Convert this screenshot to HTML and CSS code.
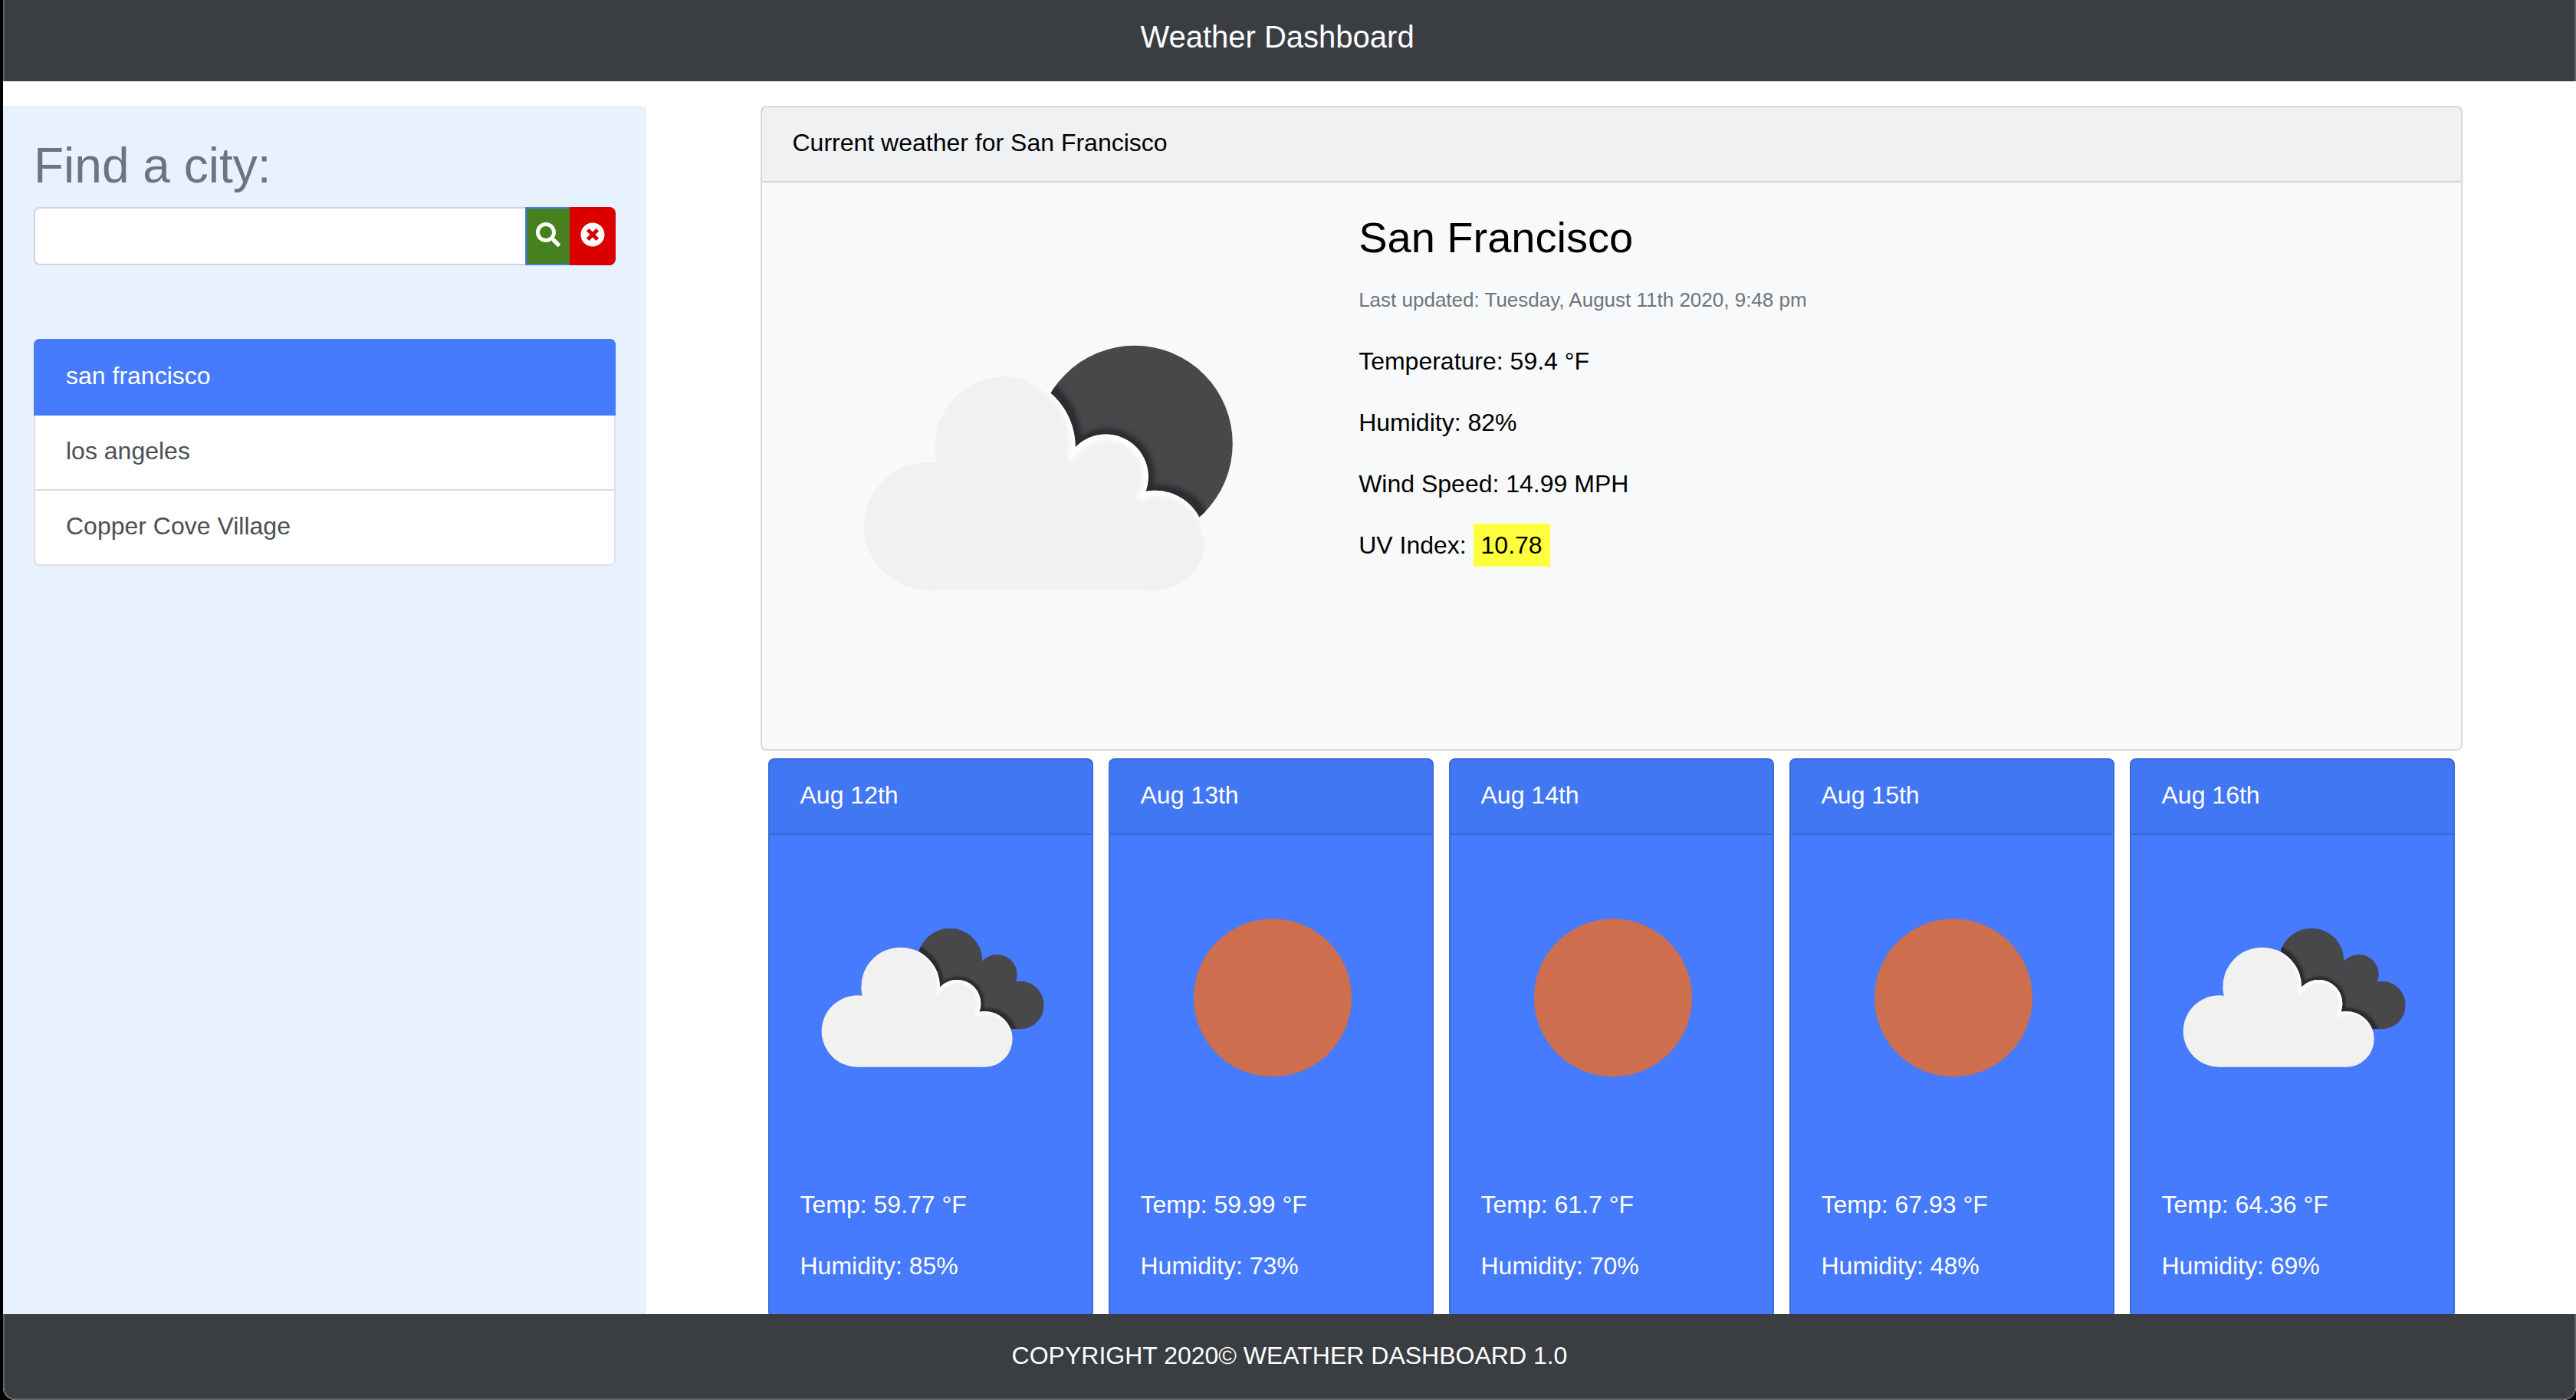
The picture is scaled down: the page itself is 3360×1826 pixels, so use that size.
FILE: index.html
```html
<!DOCTYPE html>
<html lang="en">
<head>
<meta charset="utf-8">
<title>Weather Dashboard</title>
<link rel="stylesheet" href="styles.css">
</head>
<body>
<svg class="sprite" aria-hidden="true">
  <defs>
    <g id="cloud-shape">
      <circle cx="343" cy="768" r="140"/>
      <circle cx="512" cy="594" r="154"/>
      <circle cx="733" cy="660" r="93"/>
      <circle cx="841" cy="799" r="109"/>
      <path d="M343 768 512 594 733 660 841 799V908H343z"/>
    </g>
    <clipPath id="front-clip">
      <circle cx="343" cy="768" r="140"/>
      <circle cx="512" cy="594" r="154"/>
      <circle cx="733" cy="660" r="93"/>
      <circle cx="841" cy="799" r="109"/>
      <path d="M343 768 512 594 733 660 841 799V908H343z"/>
    </clipPath>
    <clipPath id="back-clip">
      <circle cx="705" cy="492" r="127"/>
      <circle cx="890" cy="546" r="78"/>
      <circle cx="979" cy="666" r="94"/>
      <path d="M600 500 705 492 890 546 979 666V760H700z"/>
    </clipPath>
    <clipPath id="moon-clip"><circle cx="829" cy="581" r="218"/></clipPath>
    <filter id="soft" x="-20%" y="-20%" width="140%" height="140%"><feGaussianBlur stdDeviation="5"/></filter>
    <path id="rim" d="M570 440 A154 154 0 0 1 668 594 A93 93 0 0 1 822 692 A109 109 0 0 1 960 790"/>
    <g id="front-cloud">
      <use href="#cloud-shape" fill="#f1f1ef"/>
      <g clip-path="url(#front-clip)"><use href="#rim" fill="none" stroke="#fff" stroke-width="28" filter="url(#soft)"/></g>
    </g>
    <symbol id="broken-clouds" viewBox="0 0 1260 1260">
      <g clip-path="url(#back-clip)">
        <rect width="1260" height="1260" fill="#48484a"/>
        <use href="#rim" fill="none" stroke="#2c2c2e" stroke-width="22" filter="url(#soft)"/>
      </g>
      <use href="#front-cloud"/>
    </symbol>
    <symbol id="few-clouds" viewBox="0 0 1260 1260">
      <g clip-path="url(#moon-clip)">
        <rect width="1260" height="1260" fill="#48484a"/>
        <use href="#rim" transform="translate(21 -15) scale(1.015)" fill="none" stroke="#2c2c2e" stroke-width="22" filter="url(#soft)"/>
      </g>
      <use href="#front-cloud" transform="translate(21 -15) scale(1.015)"/>
    </symbol>
    <symbol id="clear-sky" viewBox="0 0 1260 1260"><circle cx="636" cy="637" r="309" fill="#cd6e4f"/></symbol>
  </defs>
</svg>

<header class="navbar"><h1 class="brand">Weather Dashboard</h1></header>

<main class="layout">
  <aside class="sidebar">
    <form class="search">
      <label class="search-label" for="city">Find a city:</label>
      <div class="input-group">
        <input class="city-input" id="city" type="text">
        <button class="btn btn-search" type="button" aria-label="Search">
          <svg class="btn-icon" viewBox="0 0 512 512"><path fill="currentColor" d="M505 442.7L405.3 343c-4.5-4.5-10.600-7-17-7H372c27.600-35.300 44-79.700 44-128C416 93.100 322.900 0 208 0S0 93.100 0 208s93.100 208 208 208c48.300 0 92.700-16.400 128-44v16.300c0 6.400 2.500 12.500 7 17l99.700 99.700c9.400 9.400 24.600 9.400 33.900 0l28.300-28.300c9.400-9.400 9.400-24.600.1-34zM208 336c-70.700 0-128-57.200-128-128 0-70.700 57.200-128 128-128 70.700 0 128 57.200 128 128 0 70.700-57.200 128-128 128z"/></svg>
        </button>
        <button class="btn btn-clear" type="button" aria-label="Clear history">
          <svg class="btn-icon" viewBox="0 0 512 512"><path fill="currentColor" d="M256 8C119 8 8 119 8 256s111 248 248 248 248-111 248-248S393 8 256 8zm121.600 313.100c4.700 4.700 4.700 12.300 0 17L338 377.600c-4.700 4.700-12.300 4.700-17 0L256 312l-65.100 65.600c-4.700 4.700-12.300 4.700-17 0L134.400 338c-4.700-4.700-4.700-12.300 0-17l65.600-65-65.600-65.100c-4.700-4.700-4.700-12.300 0-17l39.600-39.600c4.700-4.700 12.300-4.700 17 0l65 65.700 65.100-65.600c4.700-4.700 12.300-4.700 17 0l39.600 39.600c4.700 4.700 4.700 12.300 0 17L312 256l65.600 65.100z"/></svg>
        </button>
      </div>
    </form>
    <nav class="history">
      <a class="history-item active" href="#">san francisco</a>
      <a class="history-item" href="#">los angeles</a>
      <a class="history-item" href="#">Copper Cove Village</a>
    </nav>
  </aside>

  <section class="content">
    <article class="card current">
      <div class="card-header">Current weather for San Francisco</div>
      <div class="current-row">
        <svg class="current-icon" role="img" aria-label="Few clouds"><use href="#few-clouds"/></svg>
        <div class="card-body">
          <h2 class="city-name">San Francisco</h2>
          <p class="updated">Last updated: Tuesday, August 11th 2020, 9:48 pm</p>
          <p>Temperature: 59.4 °F</p>
          <p>Humidity: 82%</p>
          <p>Wind Speed: 14.99 MPH</p>
          <p>UV Index: <span class="uv">10.78</span></p>
        </div>
      </div>
    </article>

    <div class="forecast">
      <article class="card day">
        <div class="card-header">Aug 12th</div>
        <svg class="day-icon" role="img" aria-label="Broken clouds"><use href="#broken-clouds"/></svg>
        <div class="card-body"><p>Temp: 59.77 °F</p><p>Humidity: 85%</p></div>
      </article>
      <article class="card day">
        <div class="card-header">Aug 13th</div>
        <svg class="day-icon" role="img" aria-label="Clear sky"><use href="#clear-sky"/></svg>
        <div class="card-body"><p>Temp: 59.99 °F</p><p>Humidity: 73%</p></div>
      </article>
      <article class="card day">
        <div class="card-header">Aug 14th</div>
        <svg class="day-icon" role="img" aria-label="Clear sky"><use href="#clear-sky"/></svg>
        <div class="card-body"><p>Temp: 61.7 °F</p><p>Humidity: 70%</p></div>
      </article>
      <article class="card day">
        <div class="card-header">Aug 15th</div>
        <svg class="day-icon" role="img" aria-label="Clear sky"><use href="#clear-sky"/></svg>
        <div class="card-body"><p>Temp: 67.93 °F</p><p>Humidity: 48%</p></div>
      </article>
      <article class="card day">
        <div class="card-header">Aug 16th</div>
        <svg class="day-icon" role="img" aria-label="Broken clouds"><use href="#broken-clouds"/></svg>
        <div class="card-body"><p>Temp: 64.36 °F</p><p>Humidity: 69%</p></div>
      </article>
    </div>
  </section>
</main>

<footer class="footer">COPYRIGHT 2020© WEATHER DASHBOARD 1.0</footer>
</body>
</html>
```
FILE: styles.css
```css
* { box-sizing: border-box; }

html { background: #000; }

body {
  display: flex;
  flex-direction: column;
  height: 100vh;
  margin: 0 0 0 4px;
  overflow: hidden;
  border-radius: 0 0 16px 16px;
  background: #fff;
  color: #000;
  font: 32px/48px "Helvetica Neue", "Liberation Sans", Arial, sans-serif;
}

h1, h2, p { margin: 0; font-weight: 400; }

.sprite { position: absolute; width: 0; height: 0; }

.navbar {
  flex: none;
  padding: 18px 32px 28px 0;
  border: solid #5f6265;
  border-width: 0 2px;
  background: #3a3d41;
  color: #fff;
  text-align: center;
}

.brand { font-size: 40px; line-height: 60px; }

.layout {
  display: flex;
  flex: 1;
  min-height: 0;
  padding-top: 32px;
  overflow: hidden;
}

.sidebar {
  flex: none;
  width: 25%;
  padding: 40px;
  background: #e8f2ff;
}

.search { margin-bottom: 96px; }

.search-label {
  display: block;
  margin-bottom: 16px;
  color: #6c757d;
  font-size: 64px;
  line-height: 76px;
}

.input-group { display: flex; }

.city-input {
  flex: 1;
  min-width: 0;
  height: 76px;
  padding: 12px 24px;
  border: 2px solid #ced4da;
  border-right: 0;
  border-radius: 8px 0 0 8px;
  background: #fff;
  color: #495057;
  font: inherit;
}

.btn {
  display: flex;
  justify-content: center;
  width: 60px;
  height: 76px;
  padding: 18px 0 0;
  border: 2px solid;
  color: #fff;
}

.btn-search { border-color: #457bfc; background: #47801f; }

.btn-clear {
  margin-left: -2px;
  border-color: #db0000;
  border-radius: 0 8px 8px 0;
  background: #db0000;
}

.btn-icon { width: 32px; height: 32px; }

.history {
  display: flex;
  flex-direction: column;
  overflow: hidden;
  border-radius: 8px;
}

.history-item {
  padding: 22px 40px 26px;
  border: 2px solid #dfdfdf;
  border-top: 0;
  background: #fff;
  color: #495057;
  text-decoration: none;
}

.history-item:last-child { border-radius: 0 0 8px 8px; }

.history-item.active {
  border: 2px solid #457bfc;
  background: #457bfc;
  color: #fff;
}

.content {
  flex: 1;
  max-width: 2280px;
  margin: 0 auto;
  padding: 0 30px;
}

.card {
  border: 2px solid rgba(0, 0, 0, .125);
  border-radius: 8px;
  background-clip: border-box;
}

.card-header {
  padding: 22px 40px 26px;
  border-bottom: 2px solid rgba(0, 0, 0, .125);
  background: rgba(0, 0, 0, .03);
}

.card-body {
  display: flex;
  flex-direction: column;
  gap: 32px;
  padding: 38px 40px 42px;
}

.current { background-color: #f8f9fb; }

.current-row { display: grid; grid-template-columns: 1fr 2fr; }

.current-icon, .day-icon { display: block; width: 100%; aspect-ratio: 1; }

.city-name { margin-bottom: -8px; font-size: 56px; line-height: 67px; }

.updated { color: #6c757d; font-size: 26px; }

.uv { display: inline-block; margin: -4px 0; padding: 4px 10px; background: #ffff3d; }

.forecast {
  display: grid;
  grid-template-columns: repeat(5, 1fr);
  gap: 20px;
  padding: 10px;
}

.day { background-color: #457bfc; color: #fff; }

.footer {
  flex: none;
  padding: 30px 0 32px;
  border: 2px solid #5f6265;
  border-top: 0;
  border-radius: 0 0 16px 16px;
  background: #3a3d41;
  color: #fff;
  text-align: center;
}
```
